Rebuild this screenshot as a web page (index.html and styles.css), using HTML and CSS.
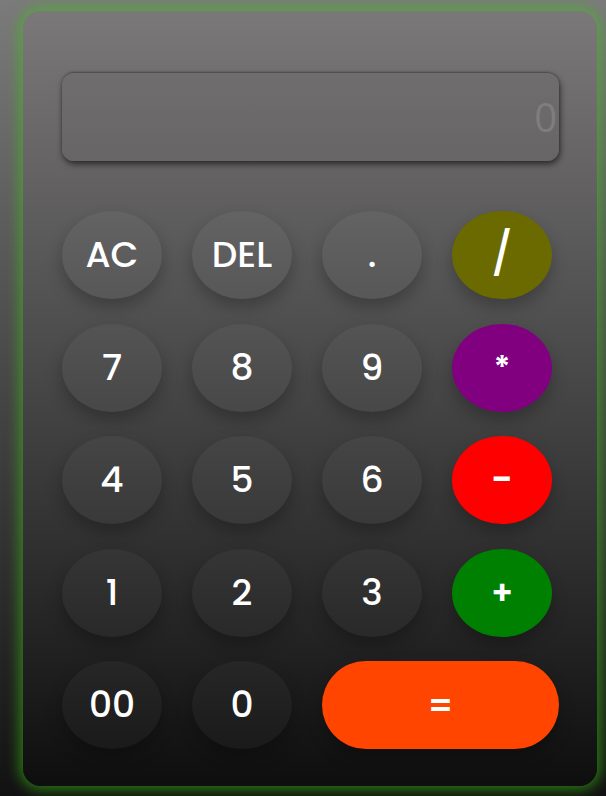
FILE: index.html
```html
<!DOCTYPE html>
<html lang="en">
<head>
<meta charset="utf-8">
<title>Calculator</title>
<link rel="stylesheet" href="styles.css">
</head>
<body>
  <div class="calculator">
    <div class="display">0</div>
    <div class="keys">
      <button class="key">AC</button>
      <button class="key">DEL</button>
      <button class="key">.</button>
      <button class="key op op-div">/</button>
      <button class="key">7</button>
      <button class="key">8</button>
      <button class="key">9</button>
      <button class="key op op-mul">*</button>
      <button class="key">4</button>
      <button class="key">5</button>
      <button class="key">6</button>
      <button class="key op op-sub">-</button>
      <button class="key">1</button>
      <button class="key">2</button>
      <button class="key">3</button>
      <button class="key op op-add">+</button>
      <button class="key">00</button>
      <button class="key">0</button>
      <button class="key op op-eq">=</button>
    </div>
  </div>
</body>
</html>
```
FILE: styles.css
```css
html, body {
  margin: 0;
  padding: 0;
}
body {
  min-height: 796px;
  background: linear-gradient(to bottom, #7b7b7b 0%, #4a4a4a 45%, #121212 100%);
  font-family: "Poppins", "Inter", "Lato", sans-serif;
  overflow: hidden;
}
.calculator {
  box-sizing: border-box;
  width: 574px;
  height: 775px;
  margin: 11px 0 10px 23px;
  padding: 62px 38px 37px 39px;
  border-radius: 18px;
  background: linear-gradient(to bottom, #7a7878 0%, #4b4a4a 45%, #0e0e0e 100%);
  box-shadow: 0 0 14px 3px rgba(60, 200, 20, 0.6);
}
.display {
  box-sizing: border-box;
  height: 88px;
  margin-bottom: 50px;
  padding-right: 2px;
  border-radius: 12px;
  background: linear-gradient(to bottom, #6f6d6d, #676565);
  box-shadow: 1px 3px 6px rgba(0, 0, 0, 0.6), 0 -1px 2px rgba(0, 0, 0, 0.3);
  color: #7f7d7d;
  font-family: "Open Sans", sans-serif;
  font-size: 40px;
  line-height: 88px;
  text-align: right;
}
.keys {
  display: grid;
  grid-template-columns: repeat(4, 100px);
  grid-auto-rows: 88px;
  column-gap: 30px;
  row-gap: 24.5px;
}
.key {
  width: 100px;
  height: 88px;
  border: none;
  border-radius: 50%;
  padding: 0;
  background: rgba(255, 255, 255, 0.03);
  box-shadow: 0 8px 16px rgba(0, 0, 0, 0.25);
  color: #fff;
  font-family: "Poppins", "Inter", "Lato", sans-serif;
  font-size: 36px;
  font-weight: 500;
  line-height: 1;
}
.op {
  font-weight: 600;
}
.op-div {
  background: #6b6a00;
  font-size: 42px;
  font-weight: 500;
}
.op-mul {
  background: #800080;
  font-size: 32px;
}
.op-sub {
  background: #ff0000;
  font-size: 38px;
}
.op-add {
  background: #008000;
  font-size: 33px;
}
.op-eq {
  grid-column: span 2;
  width: 237px;
  border-radius: 44px;
  background: #ff4500;
  font-size: 34px;
}
```
